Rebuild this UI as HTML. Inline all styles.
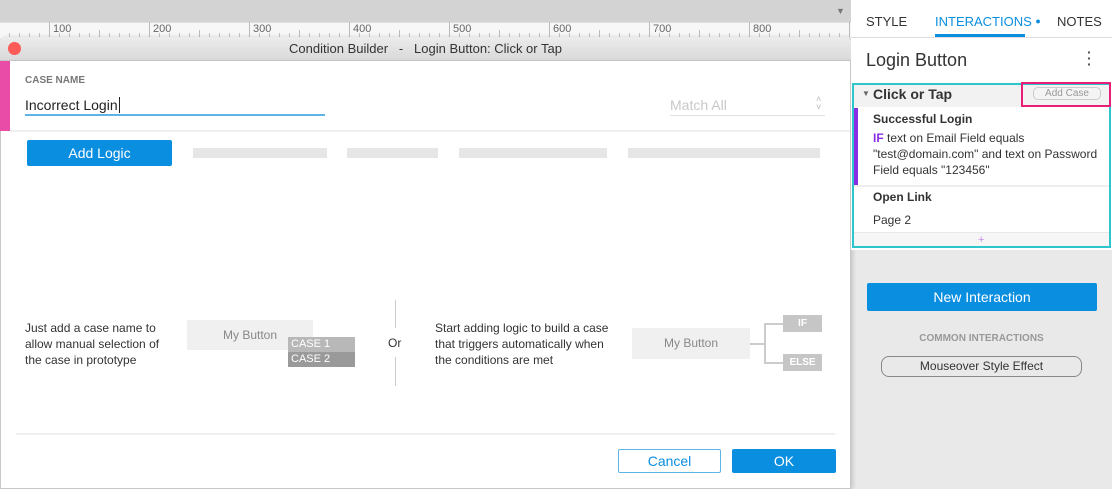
<!DOCTYPE html>
<html><head><meta charset="utf-8"><style>
*{box-sizing:border-box;margin:0;padding:0}
body{width:1112px;height:489px;overflow:hidden;position:relative;background:#e9e9e9;font-family:"Liberation Sans",sans-serif;color:#333}
.a{position:absolute}
.t{position:absolute;white-space:nowrap}
</style></head><body>
<!-- top bar -->
<div class="a" style="left:0;top:0;width:851px;height:22px;background:#d3d3d3"></div>
<div class="t" style="left:836px;top:6px;font-size:9px;color:#777">▼</div>
<!-- ruler -->
<div class="a" style="left:0;top:22px;width:851px;height:16px;background:#f7f7f7;border-top:1px solid #e0e0e0"></div>
<div class="a" style="left:0;top:33px;width:851px;height:4px;background:repeating-linear-gradient(90deg,transparent 0 9px,#c4c4c4 9px 10px)"></div>
<div class="a" style="left:0;top:30px;width:851px;height:7px;background:repeating-linear-gradient(90deg,transparent 0 99px,#bbb 99px 100px)"></div>
<div class="a" style="left:0;top:22px;width:851px;height:15px;background:repeating-linear-gradient(90deg,transparent 0 49px,#bbb 49px 50px,transparent 50px 100px)"></div>
<div class="t" style="left:53px;top:23px;font-size:11px;color:#666">100</div>
<div class="t" style="left:153px;top:23px;font-size:11px;color:#666">200</div>
<div class="t" style="left:253px;top:23px;font-size:11px;color:#666">300</div>
<div class="t" style="left:353px;top:23px;font-size:11px;color:#666">400</div>
<div class="t" style="left:453px;top:23px;font-size:11px;color:#666">500</div>
<div class="t" style="left:553px;top:23px;font-size:11px;color:#666">600</div>
<div class="t" style="left:653px;top:23px;font-size:11px;color:#666">700</div>
<div class="t" style="left:753px;top:23px;font-size:11px;color:#666">800</div>

<!-- dialog -->
<div class="a" style="left:0;top:37px;width:851px;height:452px;background:#fff;border:1px solid #c8c8c8;border-radius:5px 5px 0 0;box-shadow:2px 0 4px rgba(0,0,0,.15)"></div>
<div class="a" style="left:0;top:37px;width:851px;height:24px;background:linear-gradient(#ececec,#d9d9d9);border-bottom:1px solid #c4c4c4;border-radius:5px 5px 0 0"></div>
<div class="a" style="left:8px;top:42px;width:13px;height:13px;border-radius:50%;background:#fc5b57"></div>
<div class="t" style="left:0;width:851px;text-align:center;top:41px;font-size:13px;color:#333">Condition Builder &nbsp;&nbsp;-&nbsp;&nbsp; Login Button: Click or Tap</div>
<div class="a" style="left:0;top:61px;width:10px;height:70px;background:#e94ca6"></div>
<div class="t" style="left:25px;top:75px;font-size:10px;font-weight:bold;color:#777">CASE NAME</div>
<div class="t" style="left:25px;top:97px;font-size:14px;color:#222">Incorrect Login<span style="border-left:1px solid #222;margin-left:1px"></span></div>
<div class="a" style="left:25px;top:114px;width:300px;height:2px;background:#5fb4e6"></div>
<div class="t" style="left:670px;top:97px;font-size:14px;color:#c8c8c8">Match All</div>
<div class="t" style="left:816px;top:95px;font-size:9px;color:#bbb;line-height:8px">˄<br>˅</div>
<div class="a" style="left:670px;top:115px;width:155px;height:1px;background:#e0e0e0"></div>
<div class="a" style="left:10px;top:130px;width:840px;height:2px;background:#efefef"></div>
<div class="a" style="left:27px;top:140px;width:145px;height:26px;background:#0a8ee0;border-radius:2px;color:#fff;font-size:14px;text-align:center;line-height:26px">Add Logic</div>
<div class="a" style="left:193px;top:148px;width:134px;height:10px;background:#e6e6e6"></div>
<div class="a" style="left:347px;top:148px;width:91px;height:10px;background:#e6e6e6"></div>
<div class="a" style="left:459px;top:148px;width:148px;height:10px;background:#e6e6e6"></div>
<div class="a" style="left:628px;top:148px;width:192px;height:10px;background:#e6e6e6"></div>

<div class="a" style="left:25px;top:320px;font-size:12px;line-height:16px;color:#333">Just add a case name to<br>allow manual selection of<br>the case in prototype</div>
<div class="a" style="left:187px;top:320px;width:126px;height:30px;background:#f0f0f0;font-size:12px;color:#888;text-align:center;line-height:30px">My Button</div>
<div class="a" style="left:288px;top:337px;width:67px;height:15px;background:#b8b8b8;color:#fff;font-size:11px;line-height:15px;padding-left:3px">CASE 1</div>
<div class="a" style="left:288px;top:352px;width:67px;height:15px;background:#9a9a9a;color:#fff;font-size:11px;line-height:15px;padding-left:3px">CASE 2</div>
<div class="a" style="left:395px;top:300px;width:1px;height:28px;background:#ccc"></div>
<div class="a" style="left:395px;top:357px;width:1px;height:29px;background:#ccc"></div>
<div class="t" style="left:388px;top:336px;font-size:12px;color:#333">Or</div>
<div class="a" style="left:435px;top:320px;font-size:12px;line-height:16px;color:#333">Start adding logic to build a case<br>that triggers automatically when<br>the conditions are met</div>
<div class="a" style="left:632px;top:328px;width:118px;height:31px;background:#f0f0f0;font-size:12px;color:#888;text-align:center;line-height:31px">My Button</div>
<div class="a" style="left:750px;top:343px;width:14px;height:2px;background:#ccc"></div>
<div class="a" style="left:764px;top:323px;width:2px;height:41px;background:#ccc"></div>
<div class="a" style="left:764px;top:323px;width:19px;height:2px;background:#ccc"></div>
<div class="a" style="left:764px;top:362px;width:19px;height:2px;background:#ccc"></div>
<div class="a" style="left:783px;top:315px;width:39px;height:17px;background:#c6c6c6;color:#fff;font-size:10px;font-weight:bold;text-align:center;line-height:17px">IF</div>
<div class="a" style="left:783px;top:354px;width:39px;height:17px;background:#c6c6c6;color:#fff;font-size:10px;font-weight:bold;text-align:center;line-height:17px">ELSE</div>
<div class="a" style="left:16px;top:433px;width:819px;height:2px;background:#efefef"></div>
<div class="a" style="left:618px;top:449px;width:103px;height:24px;border:1px solid #5fb4e6;border-radius:2px;color:#0a8ee0;font-size:14px;text-align:center;line-height:22px">Cancel</div>
<div class="a" style="left:732px;top:449px;width:104px;height:24px;background:#0a8ee0;border-radius:2px;color:#fff;font-size:14px;text-align:center;line-height:24px">OK</div>

<!-- right panel -->
<div class="a" style="left:851px;top:0;width:261px;height:250px;background:#fff"></div>
<div class="a" style="left:851px;top:37px;width:261px;height:1px;background:#ddd"></div>
<div class="t" style="left:866px;top:14px;font-size:13px;color:#333">STYLE</div>
<div class="t" style="left:935px;top:14px;font-size:13px;color:#0a8ee0">INTERACTIONS <span style="font-size:9px;vertical-align:2px">●</span></div>
<div class="t" style="left:1057px;top:14px;font-size:13px;color:#333">NOTES</div>
<div class="a" style="left:935px;top:34px;width:90px;height:3px;background:#0a8ee0"></div>
<div class="t" style="left:866px;top:50px;font-size:18px;color:#333">Login Button</div>
<div class="t" style="left:1087px;top:49px;font-size:14px;line-height:6px;color:#555;font-weight:bold">·<br>·<br>·</div>
<div class="a" style="left:852px;top:83px;width:259px;height:165px;border:2px solid #2cc6cc"></div>
<div class="a" style="left:854px;top:85px;width:255px;height:22px;background:#f2f2f2"></div>
<div class="t" style="left:862px;top:89px;font-size:8px;color:#666">▼</div>
<div class="t" style="left:873px;top:86px;font-size:14px;font-weight:bold;color:#333">Click or Tap</div>
<div class="a" style="left:1021px;top:82px;width:90px;height:25px;border:2px solid #e91e78"></div>
<div class="a" style="left:1033px;top:87px;width:68px;height:13px;border:1px solid #ccc;border-radius:5px;background:#f4f4f4;font-size:10px;color:#999;text-align:center;line-height:11px">Add Case</div>
<div class="a" style="left:854px;top:108px;width:4px;height:77px;background:#8b2de2"></div>
<div class="t" style="left:873px;top:112px;font-size:12px;font-weight:bold;color:#333">Successful Login</div>
<div class="a" style="left:873px;top:130px;font-size:12px;line-height:16px;color:#333"><span style="color:#8b2de2;font-weight:bold">IF</span> text on Email Field equals<br>"test@domain.com" and text on Password<br>Field equals "123456"</div>
<div class="a" style="left:854px;top:185px;width:255px;height:2px;background:#eee"></div>
<div class="t" style="left:873px;top:190px;font-size:12px;font-weight:bold;color:#333">Open Link</div>
<div class="t" style="left:873px;top:213px;font-size:12px;color:#333">Page 2</div>
<div class="a" style="left:854px;top:232px;width:255px;height:14px;background:#f6f6f6;border-top:1px solid #e8e8e8"></div>
<div class="t" style="left:978px;top:234px;font-size:11px;color:#c88de8">+</div>
<div class="a" style="left:867px;top:283px;width:230px;height:28px;background:#0a8ee0;border-radius:2px;color:#fff;font-size:14px;text-align:center;line-height:28px">New Interaction</div>
<div class="t" style="left:851px;width:261px;text-align:center;top:333px;font-size:10px;font-weight:bold;color:#999">COMMON INTERACTIONS</div>
<div class="a" style="left:881px;top:356px;width:201px;height:21px;border:1px solid #888;border-radius:8px;font-size:12px;color:#333;text-align:center;line-height:19px">Mouseover Style Effect</div>
</body></html>
